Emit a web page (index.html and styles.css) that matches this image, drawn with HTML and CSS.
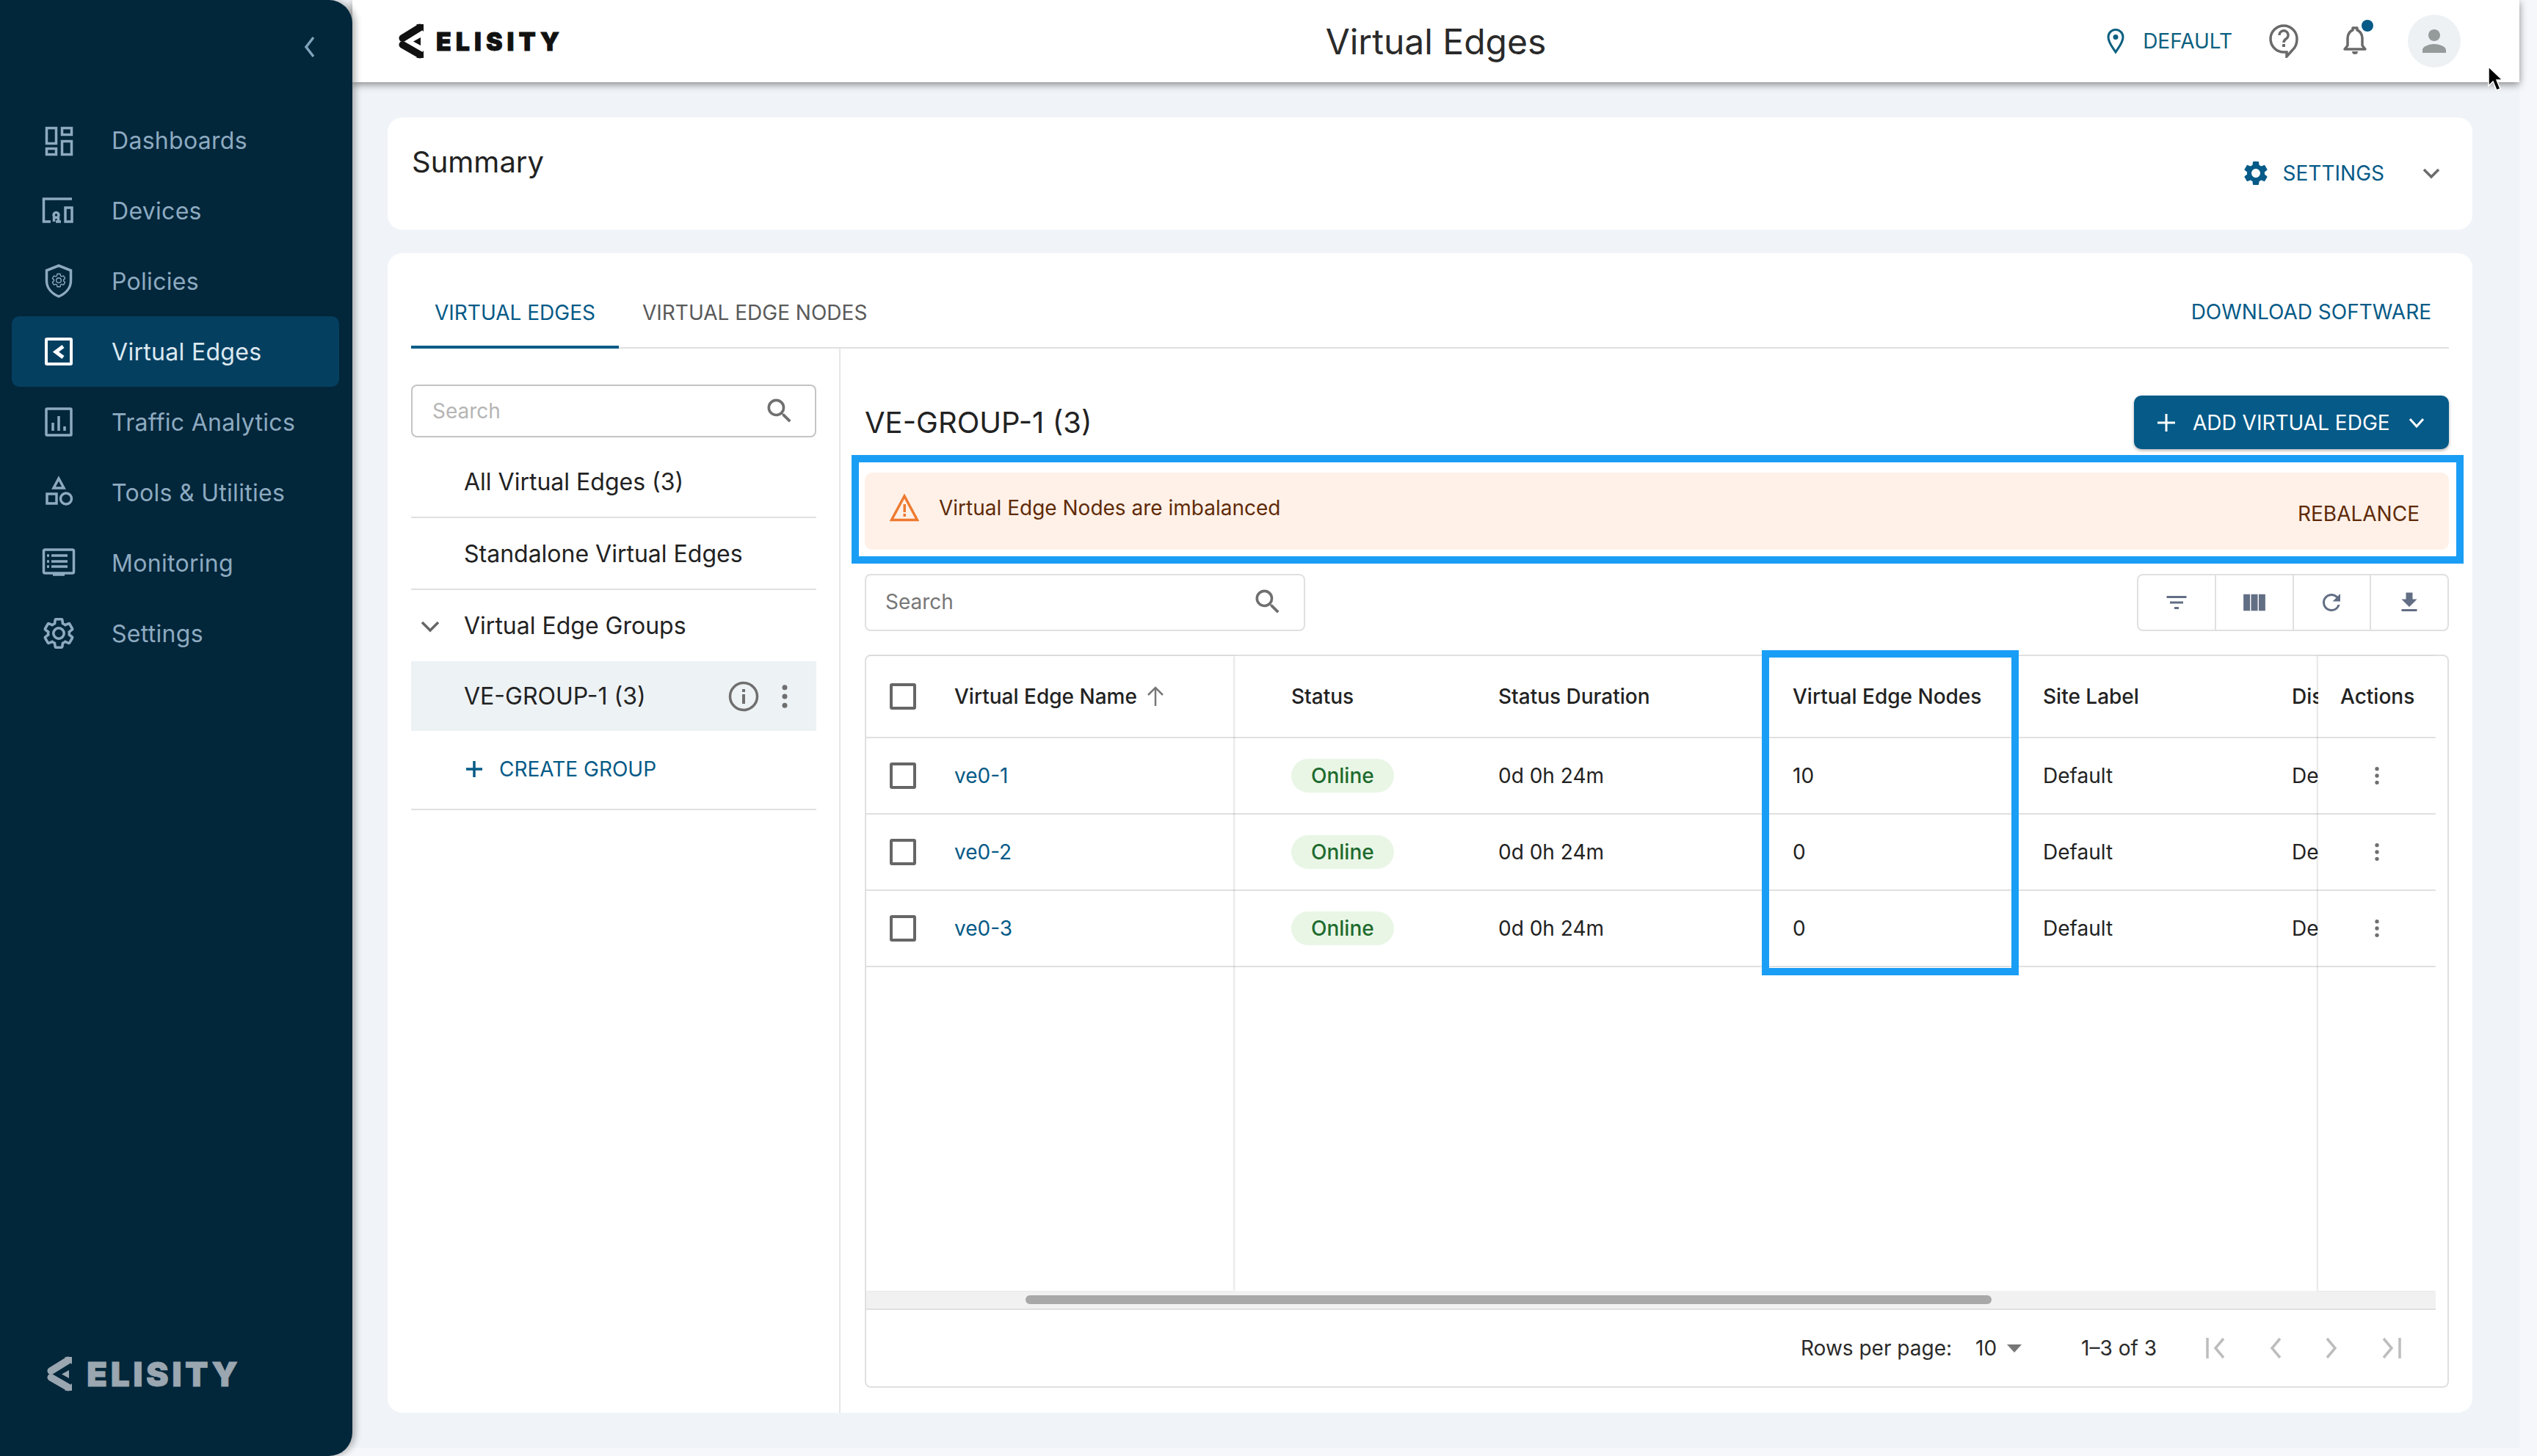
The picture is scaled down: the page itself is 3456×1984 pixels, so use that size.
FILE: index.html
```html
<!DOCTYPE html>
<html lang="en">
<head>
    <meta charset="UTF-8">
    <title>Virtual Edges</title>
    <link rel="stylesheet" href="styles.css">
</head>
<body>
    <svg class="defs" width="0" height="0">
        <symbol id="mark" viewBox="0 0 34 48">
            <path d="M29 5.500 5.500 20" fill="none" stroke="currentColor" stroke-width="10" stroke-linecap="round"/>
            <path d="M5.500 29 29 42.500" fill="none" stroke="currentColor" stroke-width="10" stroke-linecap="round"/>
            <path d="M30 19v11l-10-5.500z" fill="currentColor"/>
            <path d="M24 1h10v10z M24 47h10V37z" fill="currentColor"/>
        </symbol>
        <symbol id="gear" viewBox="0 0 24 24">
            <path d="M19.140 12.940c.04-.3.06-.61.06-.94 0-.32-.02-.64-.07-.94l2.030-1.580a.49.49 0 0 0 .12-.61l-1.920-3.320a.488.488 0 0 0-.59-.22l-2.390.96c-.5-.38-1.030-.7-1.620-.94l-.36-2.540a.484.484 0 0 0-.48-.41h-3.840c-.24 0-.43.17-.47.41l-.36 2.540c-.59.24-1.130.57-1.620.94l-2.390-.96c-.22-.08-.47 0-.59.22L2.740 8.870c-.12.21-.08.47.12.61l2.030 1.580c-.05.3-.09.63-.09.94s.02.64.07.94l-2.030 1.580a.49.49 0 0 0-.12.61l1.920 3.320c.12.22.37.29.59.22l2.390-.96c.5.38 1.030.7 1.620.94l.36 2.540c.05.24.24.41.48.41h3.840c.24 0 .44-.17.47-.41l.36-2.540c.59-.24 1.130-.56 1.620-.94l2.390.96c.22.08.47 0 .59-.22l1.920-3.320c.12-.22.07-.47-.12-.61l-2.010-1.580zM12 15.600c-1.980 0-3.600-1.620-3.600-3.600s1.620-3.600 3.600-3.600 3.600 1.620 3.600 3.600-1.620 3.600-3.600 3.600z"/>
        </symbol>
        <symbol id="search" viewBox="0 0 24 24">
            <path d="M15.500 14h-.79l-.28-.27A6.471 6.471 0 0 0 16 9.500 6.500 6.500 0 1 0 9.500 16c1.610 0 3.090-.59 4.230-1.570l.27.28v.79l5 4.990L20.490 19l-4.990-5zm-6 0C7.010 14 5 11.990 5 9.500S7.010 5 9.500 5 14 7.010 14 9.500 11.990 14 9.500 14z"/>
        </symbol>
        <symbol id="dots" viewBox="0 0 24 24">
            <circle cx="12" cy="5" r="2"/><circle cx="12" cy="12" r="2"/><circle cx="12" cy="19" r="2"/>
        </symbol>
    </svg>

    <nav class="sidebar">
        <div class="collapse">
            <svg width="20" height="32" viewBox="0 0 20 32"><path d="M15 3 5 16l10 13" fill="none" stroke="#7fa3bb" stroke-width="3.500"/></svg>
        </div>
        <ul class="nav-list">
            <li class="nav-item">
                <svg class="nav-icon" viewBox="0 0 48 48"><path d="M7.500 7.500h13v21h-13zM28.500 7.500h13v9h-13zM7.500 35.500h13v8h-13zM28.500 25.500h13v18h-13z"/></svg>
                Dashboards
            </li>
            <li class="nav-item">
                <svg class="nav-icon" viewBox="0 0 48 48"><path d="M42 8H3.500v31H13M27 39h-7M33 20h9v19h-9z"/><circle cx="20.500" cy="30" r="3.500"/><path d="M17.500 33v6M23.500 33v6"/></svg>
                Devices
            </li>
            <li class="nav-item">
                <svg class="nav-icon" viewBox="0 0 48 48"><path d="M24 3 7.500 9.500v14c0 10 7 17.500 16.500 21.500 9.500-4 16.500-11.500 16.500-21.500v-14z"/><use href="#gear" x="13" y="12" width="22" height="22" class="nav-gear"/></svg>
                Policies
            </li>
            <li class="nav-item is-active">
                <svg class="nav-icon" viewBox="0 0 48 48"><rect x="7" y="7" width="34" height="34" rx="1" stroke-width="4"/><path d="M30 17 20 24.500 30 32" stroke-width="5"/></svg>
                Virtual Edges
            </li>
            <li class="nav-item">
                <svg class="nav-icon" viewBox="0 0 48 48"><rect x="7" y="6" width="34" height="36" rx="1"/><path d="M16 25v11M24 16v20M32 30v6"/></svg>
                Traffic Analytics
            </li>
            <li class="nav-item">
                <svg class="nav-icon" viewBox="0 0 48 48"><path d="M24 5l7 13H17zM8 26h13v13H8z"/><circle cx="34" cy="32.500" r="7.500"/></svg>
                Tools &amp; Utilities
            </li>
            <li class="nav-item">
                <svg class="nav-icon" viewBox="0 0 48 48"><rect x="3.500" y="6" width="41" height="32" rx="2"/><path d="M14 14h22M14 22h22M14 29h22M8 14h3M8 22h3M8 29h3M16 40h16"/></svg>
                Monitoring
            </li>
            <li class="nav-item">
                <svg class="nav-icon nav-icon-gear" viewBox="0 0 24 24"><use href="#gear"/></svg>
                Settings
            </li>
        </ul>
        <div class="side-logo">
            <svg width="34" height="48"><use href="#mark"/></svg>
            <span class="side-logo-text">ELISITY</span>
        </div>
    </nav>

    <div class="page">
        <header class="topbar">
            <div class="top-logo">
                <svg width="34" height="48"><use href="#mark"/></svg>
                <span class="top-logo-text">ELISITY</span>
            </div>
            <div class="page-title">Virtual Edges</div>
            <div class="top-actions">
                <svg class="pin" width="26" height="36" viewBox="0 0 26 36"><path d="M13 33C8 25 3 20 3 12.500a10 10 0 0 1 20 0C23 20 18 25 13 33z" fill="none" stroke="#0d6080" stroke-width="3"/><circle cx="13" cy="12.500" r="3.500" fill="#0d6080"/></svg>
                <span class="location">DEFAULT</span>
                <svg class="help" width="40" height="46" viewBox="0 0 40 46"><path d="M20 2a18 18 0 1 0 0 36h4v6l8-9c4-3.500 6-8 6-15A18 18 0 0 0 20 2z" fill="none" stroke="#6a6a6a" stroke-width="3.500"/><path d="M14 15a6 6 0 1 1 9 5c-2 1.500-3 2.500-3 5" fill="none" stroke="#6a6a6a" stroke-width="3.500"/><rect x="18" y="27" width="4" height="4" fill="#6a6a6a"/></svg>
                <span class="bell">
                    <svg width="34" height="42" viewBox="0 0 34 42"><path d="M3 32h28l-4-5V17c0-6-4-10-7-11V3h-6v3c-3 1-7 5-7 11v10z" fill="none" stroke="#6a6a6a" stroke-width="3.500" stroke-linejoin="round"/><path d="M13 35h8c0 3-2 4-4 4s-4-1-4-4z" fill="#6a6a6a"/></svg>
                    <span class="bell-dot"></span>
                </span>
                <span class="avatar">
                    <svg width="48" height="48" viewBox="0 0 24 24"><path d="M12 12c2.210 0 4-1.790 4-4s-1.790-4-4-4-4 1.790-4 4 1.790 4 4 4zm0 2c-2.670 0-8 1.340-8 4v2h16v-2c0-2.660-5.330-4-8-4z" fill="#959b9b"/></svg>
                </span>
            </div>
            <svg class="cursor" width="22" height="36" viewBox="0 0 22 36"><path d="M2 1v26l6-6 5 12 5-2-5-12h8z" fill="#000" stroke="#fff" stroke-width="1.500"/></svg>
        </header>

        <div class="content">
            <section class="card summary">
                <h2 class="summary-title">Summary</h2>
                <div class="summary-actions">
                    <svg class="settings-gear" width="40" height="40"><use href="#gear"/></svg>
                    <span class="link-text">SETTINGS</span>
                    <svg class="chev" width="28" height="28" viewBox="0 0 28 28"><path d="M4 9l10 10L24 9" fill="none" stroke="#6b6b6b" stroke-width="3.500"/></svg>
                </div>
            </section>

            <section class="card main-card">
                <div class="tabs">
                    <span class="tab is-active">VIRTUAL EDGES</span>
                    <span class="tab">VIRTUAL EDGE NODES</span>
                    <span class="download link-text">DOWNLOAD SOFTWARE</span>
                </div>
                <div class="panes">
                    <aside class="left-pane">
                        <div class="search search-left">
                            <span class="placeholder">Search</span>
                            <svg class="search-icon" width="44" height="44"><use href="#search"/></svg>
                        </div>
                        <div class="tree">
                            <div class="tree-row tree-first">All Virtual Edges (3)</div>
                            <div class="tree-row">Standalone Virtual Edges</div>
                            <div class="tree-row tree-group">
                                <svg class="tree-chev" width="28" height="28" viewBox="0 0 28 28"><path d="M3 9l11 11L25 9" fill="none" stroke="#666" stroke-width="3.500"/></svg>
                                Virtual Edge Groups
                            </div>
                            <div class="tree-row tree-selected">
                                <span>VE-GROUP-1 (3)</span>
                                <span class="tree-tools">
                                    <svg width="42" height="42" viewBox="0 0 42 42"><circle cx="21" cy="21" r="18.500" fill="none" stroke="#6f6f6f" stroke-width="3.500"/><rect x="19" y="18" width="4" height="13" fill="#6f6f6f"/><rect x="19" y="11" width="4" height="4" fill="#6f6f6f"/></svg>
                                    <svg class="dots-icon" width="42" height="42"><use href="#dots"/></svg>
                                </span>
                            </div>
                            <div class="tree-row tree-create">
                                <svg width="28" height="28" viewBox="0 0 28 28"><path d="M14 3v22M3 14h22" stroke="#055a87" stroke-width="3.500"/></svg>
                                <span class="link-text">CREATE GROUP</span>
                            </div>
                        </div>
                    </aside>

                    <div class="right-pane">
                        <div class="pane-head">
                            <h3 class="group-title">VE-GROUP-1 (3)</h3>
                            <button class="add-btn">
                                <svg width="28" height="28" viewBox="0 0 28 28"><path d="M14 2v24M2 14h24" stroke="#fff" stroke-width="3"/></svg>
                                <span>ADD VIRTUAL EDGE</span>
                                <svg class="add-chev" width="24" height="24" viewBox="0 0 24 24"><path d="M3 7l9 10 9-10" fill="none" stroke="#fff" stroke-width="3"/></svg>
                            </button>
                        </div>

                        <div class="alert">
                            <div class="alert-msg">
                                <svg width="40" height="38" viewBox="0 0 40 38"><path d="M20 3 2.500 35.500h35z" fill="none" stroke="#ee7a30" stroke-width="3.500"/><rect x="18.500" y="14" width="3.500" height="11" fill="#ee7a30"/><rect x="18.500" y="27" width="3.500" height="4" fill="#ee7a30"/></svg>
                                <span>Virtual Edge Nodes are imbalanced</span>
                            </div>
                            <span class="rebalance">REBALANCE</span>
                        </div>

                        <div class="tools-row">
                            <div class="search search-table">
                                <span class="placeholder">Search</span>
                                <svg class="search-icon" width="44" height="44"><use href="#search"/></svg>
                            </div>
                            <div class="tool-group">
                                <span class="tool"><svg width="36" height="36" viewBox="0 0 24 24"><path d="M10 18h4v-2h-4v2zM3 6v2h18V6H3zm3 7h12v-2H6v2z"/></svg></span>
                                <span class="tool"><svg width="34" height="34" viewBox="0 0 24 24"><path d="M1.500 4h6.300v16H1.500zM8.800 4h6.400v16H8.800zM16.200 4h6.300v16h-6.300z"/></svg></span>
                                <span class="tool"><svg width="36" height="36" viewBox="0 0 24 24"><path d="M17.650 6.350A7.958 7.958 0 0 0 12 4c-4.420 0-7.990 3.580-7.990 8s3.570 8 7.990 8c3.730 0 6.840-2.550 7.730-6h-2.080A5.990 5.990 0 0 1 12 18c-3.310 0-6-2.690-6-6s2.690-6 6-6c1.660 0 3.140.69 4.220 1.780L13 11h7V4l-2.350 2.350z"/></svg></span>
                                <span class="tool"><svg width="36" height="36" viewBox="0 0 24 24"><path d="M19 9h-4V3H9v6H5l7 7 7-7zM5 18v2h14v-2H5z"/></svg></span>
                            </div>
                        </div>

                        <div class="table-box">
                            <div class="table-cols">
                                <div class="col-fixed col-name">
                                    <div class="cell head-cell"><span class="check"></span>Virtual Edge Name
                                        <svg class="sort" width="26" height="30" viewBox="0 0 26 30"><path d="M13 28V4M3 13l10-10 10 10" fill="none" stroke="#777" stroke-width="2.500"/></svg>
                                    </div>
                                    <div class="cell"><span class="check"></span><span class="ve-link">ve0-1</span></div>
                                    <div class="cell"><span class="check"></span><span class="ve-link">ve0-2</span></div>
                                    <div class="cell"><span class="check"></span><span class="ve-link">ve0-3</span></div>
                                </div>
                                <div class="col-scroll">
                                    <div class="grid">
                                        <div class="cell head-cell">Status</div>
                                        <div class="cell head-cell">Status Duration</div>
                                        <div class="cell head-cell">Virtual Edge Nodes</div>
                                        <div class="cell head-cell">Site Label</div>
                                        <div class="cell head-cell">Distribution</div>

                                        <div class="cell"><span class="pill">Online</span></div>
                                        <div class="cell">0d 0h 24m</div>
                                        <div class="cell">10</div>
                                        <div class="cell">Default</div>
                                        <div class="cell">Default</div>

                                        <div class="cell"><span class="pill">Online</span></div>
                                        <div class="cell">0d 0h 24m</div>
                                        <div class="cell">0</div>
                                        <div class="cell">Default</div>
                                        <div class="cell">Default</div>

                                        <div class="cell"><span class="pill">Online</span></div>
                                        <div class="cell">0d 0h 24m</div>
                                        <div class="cell">0</div>
                                        <div class="cell">Default</div>
                                        <div class="cell">Default</div>
                                    </div>
                                </div>
                                <div class="col-fixed col-actions">
                                    <div class="cell head-cell">Actions</div>
                                    <div class="cell"><svg class="dots-icon" width="32" height="32"><use href="#dots"/></svg></div>
                                    <div class="cell"><svg class="dots-icon" width="32" height="32"><use href="#dots"/></svg></div>
                                    <div class="cell"><svg class="dots-icon" width="32" height="32"><use href="#dots"/></svg></div>
                                </div>
                            </div>
                            <div class="hscroll"><div class="hscroll-thumb"></div></div>
                            <div class="pager">
                                <span>Rows per page:</span>
                                <span class="page-size">10</span>
                                <span class="page-caret"></span>
                                <span class="page-range">1–3 of 3</span>
                                <svg class="page-btn" width="30" height="34" viewBox="0 0 30 34"><path d="M3 3v28M25 4 14 17l11 13" fill="none" stroke="#bdbdbd" stroke-width="3.500"/></svg>
                                <svg class="page-btn" width="20" height="34" viewBox="0 0 20 34"><path d="M16 4 5 17l11 13" fill="none" stroke="#bdbdbd" stroke-width="3.500"/></svg>
                                <svg class="page-btn" width="20" height="34" viewBox="0 0 20 34"><path d="M4 4l11 13L4 30" fill="none" stroke="#bdbdbd" stroke-width="3.500"/></svg>
                                <svg class="page-btn" width="30" height="34" viewBox="0 0 30 34"><path d="M27 3v28M5 4l11 13L5 30" fill="none" stroke="#bdbdbd" stroke-width="3.500"/></svg>
                            </div>
                            <div class="callout-column"></div>
                        </div>
                    </div>
                </div>
            </section>
        </div>
    </div>
</body>
</html>
```

FILE: styles.css
```css
body {
    margin: 0;
    height: 1984px;
    display: flex;
    align-items: flex-start;
    overflow: hidden;
    background-color: #f5f7fa;
    font-family: Inter, "Noto Sans", sans-serif;
    font-size: 28px;
    color: #222;
}

h2, h3, ul {
    margin: 0;
    padding: 0;
    font-weight: 400;
}

.defs {
    position: absolute;
}

/* Sidebar */
.sidebar {
    width: 480px;
    height: 1984px;
    flex: none;
    display: flex;
    flex-direction: column;
    background-color: #02263a;
    border-radius: 0 32px 32px 0;
    box-shadow: 4px 0 10px rgba(0, 0, 0, 0.3);
    position: relative;
    z-index: 2;
}

.collapse {
    height: 143px;
    display: flex;
    justify-content: flex-end;
    align-items: flex-start;
    padding: 48px 48px 0 0;
    box-sizing: border-box;
}

.nav-list {
    list-style: none;
    padding: 0 18px 0 16px;
}

.nav-item {
    height: 96px;
    display: flex;
    align-items: center;
    gap: 48px;
    padding-left: 40px;
    border-radius: 10px;
    font-size: 32px;
    letter-spacing: 0.3px;
    color: #8daac0;
}

.nav-item.is-active {
    background-color: #053f60;
    color: #dce9f1;
}

.nav-icon {
    width: 48px;
    height: 48px;
    flex: none;
    fill: none;
    stroke: #8daac0;
    stroke-width: 3.500;
}

.is-active .nav-icon {
    stroke: #fff;
}

.nav-gear {
    fill: none;
    stroke-width: 1.500;
}

.nav-icon-gear {
    stroke-width: 1.800;
}

.side-logo {
    margin-top: auto;
    display: flex;
    align-items: center;
    gap: 20px;
    padding: 0 0 88px 64px;
    color: #9aa6b0;
}

.side-logo-text {
    font-size: 46px;
    font-weight: 900;
    letter-spacing: 4.500px;
    line-height: 48px;
    -webkit-text-stroke: 0.8px #9aa6b0;
}

/* Top bar */
.page {
    width: 2952px;
    height: 1973px;
    flex: none;
    display: flex;
    flex-direction: column;
    background-color: #f0f4f8;
}

.topbar {
    height: 112px;
    flex: none;
    position: relative;
    display: flex;
    align-items: center;
    justify-content: center;
    background-color: #fff;
    box-shadow: 0 3px 10px rgba(0, 0, 0, 0.45);
    z-index: 1;
}

.top-logo {
    position: absolute;
    left: 63px;
    top: 32px;
    display: flex;
    align-items: center;
    gap: 17px;
    color: #111;
}

.top-logo-text {
    font-size: 34px;
    font-weight: 900;
    letter-spacing: 6px;
    -webkit-text-stroke: 0.8px #111;
}

.page-title {
    font-size: 48px;
    color: #2a2a2a;
}

.top-actions {
    position: absolute;
    right: 80px;
    top: 20px;
    height: 72px;
    display: flex;
    align-items: center;
}

.pin {
    margin-right: 2px;
}

.location {
    margin-left: 22px;
    color: #0d6080;
}

.help {
    margin-left: 50px;
}

.bell {
    position: relative;
    margin-left: 60px;
    display: flex;
}

.bell-dot {
    position: absolute;
    top: -8px;
    right: -8px;
    width: 16px;
    height: 16px;
    border-radius: 50%;
    background-color: #055a87;
}

.avatar {
    width: 72px;
    height: 72px;
    margin-left: 55px;
    border-radius: 50%;
    background-color: #edf1f4;
    display: flex;
    align-items: center;
    justify-content: center;
}

.cursor {
    position: absolute;
    right: 22px;
    top: 90px;
}

/* Cards */
.content {
    padding: 48px 64px 0 48px;
    display: flex;
    flex-direction: column;
    gap: 32px;
}

.card {
    background-color: #fff;
    border-radius: 20px;
}

.link-text {
    color: #055a87;
}

.summary {
    height: 153px;
    box-sizing: border-box;
    padding: 33px 32px 0 33px;
    display: flex;
    justify-content: space-between;
    align-items: flex-start;
}

.summary-title {
    font-size: 40px;
    line-height: 56px;
}

.summary-actions {
    display: flex;
    align-items: center;
    height: 56px;
    margin-top: 15px;
    padding-right: 10px;
}

.settings-gear {
    fill: #055a87;
    margin-right: 17px;
}

.chev {
    margin-left: 50px;
}

.main-card {
    height: 1580px;
    box-sizing: border-box;
    padding: 32px 32px 0;
}

.tabs {
    height: 98px;
    box-sizing: border-box;
    display: flex;
    align-items: stretch;
    border-bottom: 2px solid #e0e0e0;
}

.tab {
    display: flex;
    align-items: center;
    padding: 0 32px;
    margin-bottom: -2px;
    color: #5a5a5a;
}

.tab.is-active {
    color: #055a87;
    box-shadow: inset 0 -4px 0 #055a87;
}

.download {
    margin-left: auto;
    padding-right: 24px;
    align-self: center;
}

.panes {
    display: flex;
    height: 1450px;
}

/* Left pane */
.left-pane {
    width: 585px;
    flex: none;
    box-sizing: border-box;
    padding: 49px 31px 0 0;
    border-right: 2px solid #e6e6e6;
}

.search {
    display: flex;
    align-items: center;
    justify-content: space-between;
    box-sizing: border-box;
    border-radius: 8px;
}

.search-left {
    height: 72px;
    padding: 0 26px 0 27px;
    border: 2px solid #c4c4c4;
}

.search-table {
    width: 600px;
    height: 78px;
    padding: 0 27px 2px 26px;
    border: 2px solid #e0e0e0;
}

.placeholder {
    color: #b5b5b5;
}

.search-table .placeholder {
    color: #777;
}

.search-icon {
    fill: #6f6f6f;
}

.tree {
    margin-top: 12px;
}

.tree-row {
    height: 98px;
    box-sizing: border-box;
    display: flex;
    align-items: center;
    padding-left: 72px;
    border-bottom: 2px solid #e0e0e0;
    font-size: 32px;
    color: #222;
}

.tree-group {
    height: 97px;
    border-bottom: none;
    padding-left: 12px;
    gap: 32px;
}

.tree-selected {
    height: 95px;
    justify-content: space-between;
    border-bottom: none;
    background-color: #edf2f5;
}

.tree-tools {
    display: flex;
    align-items: center;
    gap: 14px;
    padding-right: 22px;
}

.dots-icon {
    fill: #6f6f6f;
}

.tree-create {
    height: 108px;
    padding-bottom: 2px;
    gap: 20px;
    font-size: 28px;
}

/* Right pane */
.right-pane {
    flex: 1;
    min-width: 0;
    padding: 64px 0 0 33px;
}

.pane-head {
    height: 73px;
    display: flex;
    justify-content: space-between;
    align-items: center;
}

.group-title {
    font-size: 40px;
}

.add-btn {
    width: 429px;
    height: 73px;
    display: flex;
    align-items: center;
    padding: 0 0 0 30px;
    border: none;
    border-radius: 10px;
    background-color: #055a87;
    color: #fff;
    font-family: inherit;
    font-size: 28px;
    box-shadow: 0 2px 4px rgba(0, 0, 0, 0.3);
}

.add-btn span {
    margin: 0 24px 0 22px;
}

.alert {
    position: relative;
    height: 105px;
    margin-top: 32px;
    padding: 0 40px 0 34px;
    border-radius: 10px;
    background-color: #fff1e8;
    color: #5f2b08;
    display: flex;
    justify-content: space-between;
}

.alert-msg {
    display: flex;
    align-items: center;
    gap: 27px;
    height: 96px;
}

.rebalance {
    margin-top: 39px;
}

/* blue box drawn over the shot */
.alert::after {
    content: "";
    position: absolute;
    inset: -24px -20px -19px -18px;
    border: 10px solid #1a9ef5;
}

.tools-row {
    margin-top: 33px;
    display: flex;
    justify-content: space-between;
}

.tool-group {
    display: flex;
    width: 425px;
    height: 78px;
    box-sizing: border-box;
    border: 2px solid #e0e0e0;
    border-radius: 8px;
}

.tool {
    flex: 1;
    display: flex;
    align-items: center;
    justify-content: center;
    border-left: 2px solid #e0e0e0;
}

.tool:first-child {
    border-left: none;
}

.tool svg {
    fill: #626e84;
}

/* Table */
.table-box {
    position: relative;
    height: 999px;
    margin-top: 32px;
    box-sizing: border-box;
    display: flex;
    flex-direction: column;
    border: 2px solid #e0e0e0;
    border-radius: 8px;
    padding-right: 16px;
}

.table-cols {
    flex: 1;
    min-height: 0;
    display: flex;
}

.col-fixed {
    flex: none;
    position: relative;
}

.col-name {
    width: 500px;
    box-shadow: 2px 0 2px rgba(0, 0, 0, 0.1);
}

.col-actions {
    width: 160px;
    box-shadow: -2px 0 2px rgba(0, 0, 0, 0.1);
}

.col-scroll {
    flex: 1;
    min-width: 0;
    overflow: hidden;
}

.grid {
    width: 1700px;
    display: grid;
    grid-template-columns: 282px 401px 341px 339px 337px;
}

.cell {
    height: 104px;
    box-sizing: border-box;
    display: flex;
    align-items: center;
    border-bottom: 2px solid #e0e0e0;
    white-space: nowrap;
}

.head-cell {
    height: 112px;
    font-weight: 500;
}

.grid .cell {
    padding-left: 79px;
}

.col-name .cell {
    padding-left: 32px;
}

.col-actions .head-cell {
    padding-left: 30px;
}

.col-actions .dots-icon {
    margin-left: 64px;
}

.check {
    width: 36px;
    height: 36px;
    box-sizing: border-box;
    margin-right: 52px;
    border: 4px solid #666;
    border-radius: 3px;
}

.sort {
    margin-left: 12px;
}

.ve-link {
    color: #055a87;
}

.pill {
    height: 46px;
    display: flex;
    align-items: center;
    padding: 0 27px;
    border-radius: 23px;
    background-color: #e9f6e6;
    color: #1e6b2e;
    font-weight: 500;
}

.hscroll {
    height: 26px;
    flex: none;
    box-sizing: border-box;
    background-color: #f1f1f1;
    border-bottom: 2px solid #e0e0e0;
    padding: 6px 0 0 217px;
}

.hscroll-thumb {
    width: 1316px;
    height: 12px;
    border-radius: 6px;
    background-color: #a8a8a8;
}

.pager {
    height: 104px;
    flex: none;
    display: flex;
    align-items: center;
    justify-content: flex-end;
    padding-right: 46px;
    color: #2a2a2a;
}

.page-size {
    margin-left: 32px;
}

.page-caret {
    margin-left: 14px;
    border-left: 10px solid transparent;
    border-right: 10px solid transparent;
    border-top: 11px solid #777;
}

.page-range {
    margin: 0 66px 0 81px;
}

.page-btn {
    margin-left: 56px;
}

.page-btn:first-of-type {
    margin-left: 0;
}

/* second blue box over the nodes column */
.callout-column {
    position: absolute;
    left: 1220px;
    top: -8px;
    width: 350px;
    height: 443px;
    box-sizing: border-box;
    border: 10px solid #1a9ef5;
}
```
